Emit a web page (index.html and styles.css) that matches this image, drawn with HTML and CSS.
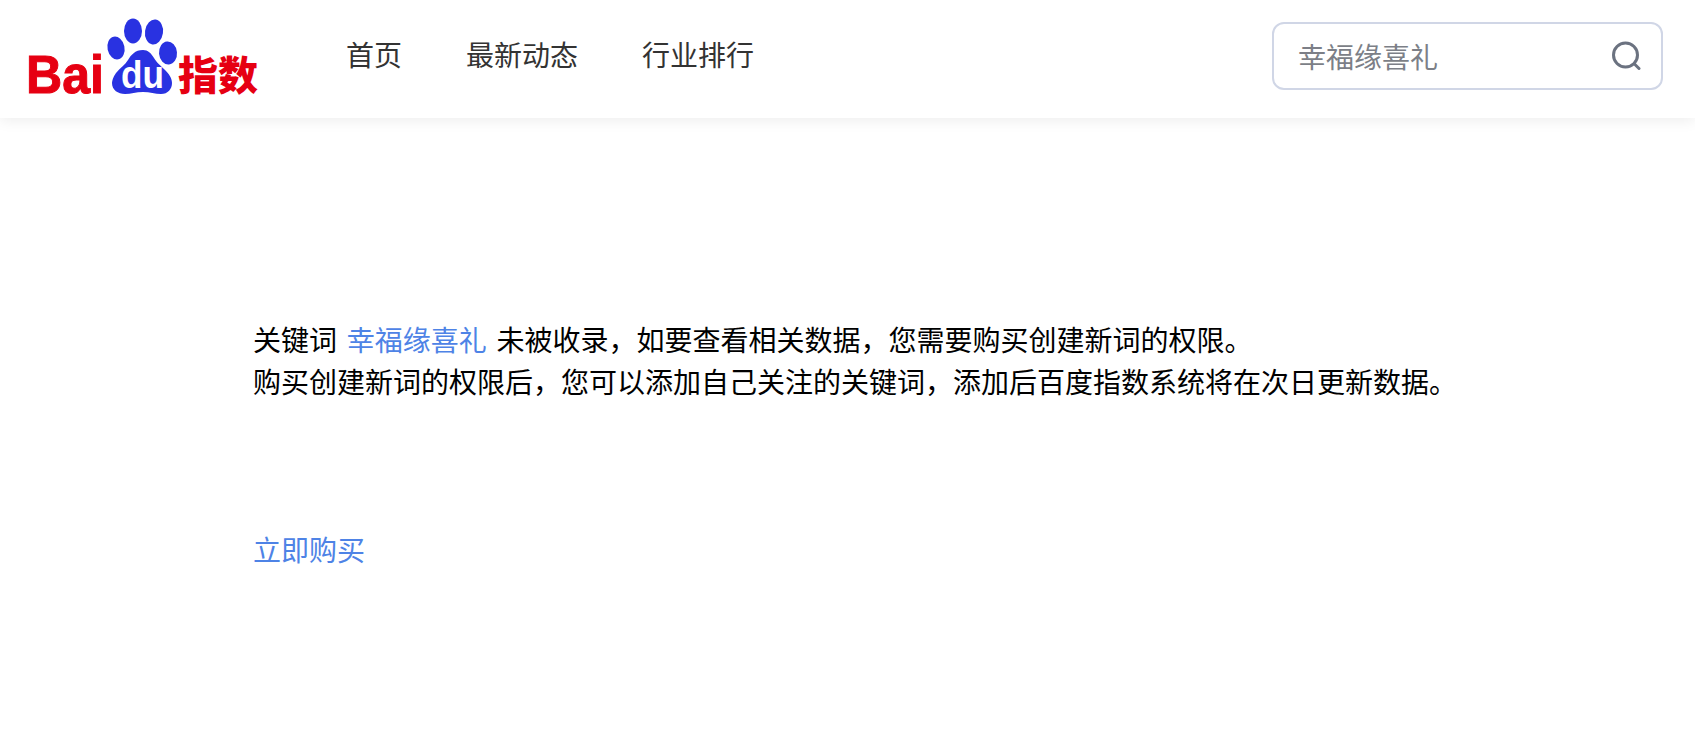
FILE: index.html
```html
<!DOCTYPE html>
<html lang="zh-CN">
<head>
<meta charset="utf-8">
<title>百度指数</title>
<link rel="stylesheet" href="styles.css">
</head>
<body>
<header class="header">
  <a class="logo">
    <svg width="280" height="118" viewBox="0 0 280 118">
      <text class="logo-bai" x="26" y="93" textLength="78" lengthAdjust="spacingAndGlyphs">Bai</text>
      <g fill="#2932e1">
        <ellipse cx="116" cy="48" rx="8.500" ry="11.500" transform="rotate(-12 116 48)"/>
        <ellipse cx="133" cy="31" rx="9" ry="12.500"/>
        <ellipse cx="154" cy="32" rx="9" ry="12.500" transform="rotate(8 154 32)"/>
        <ellipse cx="168" cy="53" rx="9" ry="11.500" transform="rotate(-5 168 53)"/>
        <path d="M143 50c-8 0-12 5-15 10-3 5-8 8-12 13-3 4-4 8-4 10 0 7 6 11 13 11 6 0 11-2 18-2s12 2 18 2c7 0 11-5 11-11 0-5-3-9-7-13-5-5-8-7-11-12-3-5-6-8-11-8z"/>
      </g>
      <text class="logo-du" x="121" y="88" textLength="43" lengthAdjust="spacingAndGlyphs">du</text>
      <text class="logo-cn" x="178" y="90">指数</text>
    </svg>
  </a>
  <nav class="nav">
    <a class="nav-item">首页</a>
    <a class="nav-item">最新动态</a>
    <a class="nav-item">行业排行</a>
  </nav>
  <div class="search">
    <span class="search-text">幸福缘喜礼</span>
    <svg class="search-icon" width="30" height="30" viewBox="0 0 30 30" fill="none" stroke="#6b7280" stroke-width="3" stroke-linecap="round">
      <circle cx="14.500" cy="14" r="12"/>
      <path d="M23.500 23l4.500 4.500"/>
    </svg>
  </div>
</header>
<main class="main">
  <p class="line">关键词 <a class="link">幸福缘喜礼</a> 未被收录，如要查看相关数据，您需要购买创建新词的权限。</p>
  <p class="line">购买创建新词的权限后，您可以添加自己关注的关键词，添加后百度指数系统将在次日更新数据。</p>
  <a class="link buy">立即购买</a>
</main>
</body>
</html>
```
FILE: styles.css
```css
* { box-sizing: border-box; }
html, body { margin: 0; height: 100%; background: #fff; overflow: hidden; }
body { font-family: "Liberation Sans", "Noto Sans CJK SC", sans-serif; color: #000; }
.header { height: 118px; display: flex; align-items: center; padding: 0 32px 0 0; background: #fff; box-shadow: 0 2px 14px rgba(0,0,0,.08); }
.logo { width: 280px; height: 118px; display: block; flex: none; }
.logo svg { display: block; }
.logo-bai { font-family: "Liberation Sans", sans-serif; font-size: 54px; font-weight: 700; fill: #e60012; stroke: #e60012; stroke-width: 1px; }
.logo-du { font-family: "Liberation Sans", sans-serif; font-size: 38px; font-weight: 700; fill: #fff; }
.logo-cn { font-family: "Noto Sans CJK SC", sans-serif; font-size: 40px; font-weight: 900; fill: #e60012; }
.nav { display: flex; gap: 64px; margin-left: 66px; margin-top: -4px; flex: 1; }
.nav-item { font-size: 28px; line-height: 40px; color: #333; }
.search { width: 391px; height: 68px; margin-top: -7px; border: 2px solid #d0d6e6; border-radius: 12px; display: flex; align-items: center; justify-content: space-between; padding: 0 20px 0 24px; }
.search-text { font-size: 28px; color: #7c7f87; }
.search-icon { flex: none; }
.main { padding: 203px 0 0 253px; }
.line { margin: 0; font-size: 28px; line-height: 42px; word-spacing: 2px; }
.link { color: #4e83e6; }
.buy { display: block; margin-top: 126px; font-size: 28px; line-height: 42px; }
```
